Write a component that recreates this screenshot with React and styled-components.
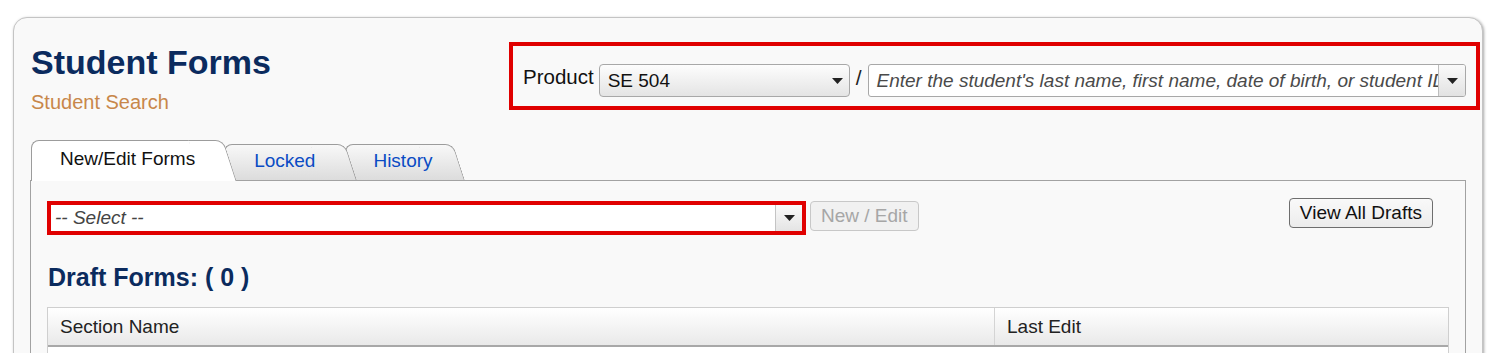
import React from 'react'
import styled, { createGlobalStyle } from 'styled-components'

const GlobalStyle = createGlobalStyle`
  body {
    margin: 0;
    background: #ffffff;
    font-family: "Liberation Sans", Arial, sans-serif;
  }
`

const Page = styled.div`
  padding: 17px 17px 0 13px;
`

const Panel = styled.div`
  background: #f9f9f9;
  border: 1px solid #c4c4c4;
  border-radius: 14px;
  box-shadow: 1px 1px 3px rgba(0, 0, 0, 0.35);
  padding: 0 16px 40px 16px;
`

const Header = styled.div`
  display: flex;
  justify-content: space-between;
  align-items: flex-start;
  padding: 24px 0 0 1px;
  margin-right: -14px;
`

const TitleBlock = styled.div`
  display: flex;
  flex-direction: column;
`

const Title = styled.h1`
  margin: 0;
  font-size: 34px;
  line-height: 40px;
  font-weight: bold;
  color: #0b2b5e;
`

const SubTitle = styled.div`
  margin-top: 8px;
  font-size: 20px;
  line-height: 24px;
  color: #c8874a;
`

const Highlight = styled.div`
  display: flex;
  align-items: center;
  border: 4px solid #e00000;
  padding: 18px 10px 9px 10px;
  width: 943px;
  gap: 5px;
`

const Label = styled.span`
  font-size: 20.5px;
  color: #111;
  margin-bottom: 7px;
`

const ProductSelect = styled.div`
  display: flex;
  align-items: center;
  justify-content: space-between;
  box-sizing: border-box;
  width: 251px;
  height: 33px;
  padding: 0 6px 0 8px;
  border: 1px solid #a8a8a8;
  border-radius: 4px;
  background: linear-gradient(#fdfdfd, #e4e4e4);
  font-size: 19px;
  color: #111;
`

const Slash = styled.span`
  font-size: 21px;
  color: #222;
  margin: 0 1px 6px 1px;
`

const Combo = styled.div`
  display: flex;
  flex: 1;
  min-width: 0;
  box-sizing: border-box;
  height: 33px;
  border: 1px solid #a8a8a8;
  border-radius: 3px;
  background: #fff;
  overflow: hidden;
`

const ComboText = styled.div`
  flex: 1;
  display: flex;
  align-items: center;
  padding-left: 8px;
  font-size: 19px;
  font-style: italic;
  color: #4a4a4a;
  white-space: nowrap;
  overflow: hidden;
`

const ComboButton = styled.div`
  flex: none;
  width: 26px;
  display: flex;
  align-items: center;
  justify-content: center;
  border-left: 1px solid #bdbdbd;
  background: linear-gradient(#fafafa, #e2e2e2);
`

const TabStrip = styled.div`
  display: flex;
  align-items: flex-end;
  margin-top: 26px;
  padding-left: 1px;
  height: 40px;
`

const Tab = styled.div`
  position: relative;
  z-index: ${(p) => p.$z};
  box-sizing: border-box;
  height: ${(p) => (p.$active ? 41 : 37)}px;
  margin-bottom: -1px;
  padding: 0 ${(p) => p.$right}px 4px ${(p) => p.$left}px;
  display: flex;
  align-items: center;
  font-size: 19px;
  color: ${(p) => (p.$active ? '#111' : '#0a4bc4')};

  &::before,
  &::after {
    content: '';
    position: absolute;
    top: 0;
    bottom: ${(p) => (p.$active ? 0 : 1)}px;
    z-index: -1;
    border-top: 1px solid #9c9c9c;
    background: ${(p) =>
      p.$active ? '#ffffff' : 'linear-gradient(#f8f8f8, #dcdcdc)'};
  }

  &::before {
    left: 0;
    right: 10px;
    border-left: 1px solid #9c9c9c;
    border-top-left-radius: 8px;
  }

  &::after {
    right: -6px;
    width: 34px;
    border-right: 1px solid #9c9c9c;
    border-top-right-radius: 8px;
    transform: skewX(18deg);
  }
`

const TabPanel = styled.div`
  border: 1px solid #a2a2a2;
  background: #f9f9f9;
  padding: 20px 16px 0 16px;
`

const ToolRow = styled.div`
  display: flex;
  align-items: flex-start;
  gap: 4px;
`

const RedSelect = styled.div`
  display: flex;
  width: 759px;
  height: 34px;
  box-sizing: border-box;
  border: 4px solid #e00000;
  background: #fff;
`

const SelectText = styled.div`
  flex: 1;
  display: flex;
  align-items: center;
  padding-left: 4px;
  font-size: 19px;
  font-style: italic;
  color: #444;
`

const SelectButton = styled.div`
  width: 26px;
  display: flex;
  align-items: center;
  justify-content: center;
  border-left: 1px solid #c4c4c4;
  background: linear-gradient(#fafafa, #e4e4e4);
`

const Button = styled.button`
  box-sizing: border-box;
  height: 30px;
  padding: 0 10px;
  font-family: inherit;
  font-size: 19px;
  border-radius: 4px;
  border: 1px solid ${(p) => (p.disabled ? '#c8c8c8' : '#6e6e6e')};
  color: ${(p) => (p.disabled ? '#a6a6a6' : '#111')};
  background: ${(p) => (p.disabled ? '#f1f1f1' : 'linear-gradient(#f9f9f9, #ececec)')};
  margin-top: ${(p) => p.$offset || 0}px;
  margin-right: ${(p) => p.$right || 0}px;
`

const Spacer = styled.div`
  flex: 1;
`

const SectionHeading = styled.h2`
  margin: 28px 0 0 1px;
  font-size: 25px;
  line-height: 28px;
  font-weight: bold;
  color: #0b2b5e;
`

const Table = styled.div`
  margin-top: 16px;
  border: 1px solid #cfcfcf;
  background: #fff;
`

const HeaderRow = styled.div`
  display: grid;
  grid-template-columns: 946px 1fr;
  height: 37px;
  border-bottom: 2px solid #a8a8a8;
  background: linear-gradient(#ffffff, #e9e9e9);
`

const HeaderCell = styled.div`
  display: flex;
  align-items: center;
  padding-left: 12px;
  font-size: 19px;
  color: #222;
  border-left: ${(p) => (p.$divider ? '1px solid #d4d4d4' : 'none')};
`

const BodyRow = styled.div`
  height: 40px;
`

const Arrow = () => (
  <svg width="11" height="6" viewBox="0 0 11 6">
    <path d="M0 0 L11 0 L5.5 6 Z" fill="#222" />
  </svg>
)

const App = () => {
  return (
    <Page>
      <GlobalStyle />
      <Panel>
        <Header>
          <TitleBlock>
            <Title>Student Forms</Title>
            <SubTitle>Student Search</SubTitle>
          </TitleBlock>
          <Highlight>
            <Label>Product</Label>
            <ProductSelect>
              <span>SE 504</span>
              <Arrow />
            </ProductSelect>
            <Slash>/</Slash>
            <Combo>
              <ComboText>
                Enter the student's last name, first name, date of birth, or student ID
              </ComboText>
              <ComboButton>
                <Arrow />
              </ComboButton>
            </Combo>
          </Highlight>
        </Header>

        <TabStrip>
          <Tab $active $z={3} $left={29} $right={29}>New/Edit Forms</Tab>
          <Tab $z={2} $left={30} $right={30}>Locked</Tab>
          <Tab $z={1} $left={28} $right={20}>History</Tab>
        </TabStrip>

        <TabPanel>
          <ToolRow>
            <RedSelect>
              <SelectText>-- Select --</SelectText>
              <SelectButton>
                <Arrow />
              </SelectButton>
            </RedSelect>
            <Button disabled>New / Edit</Button>
            <Spacer />
            <Button $offset={-3} $right={16}>View All Drafts</Button>
          </ToolRow>

          <SectionHeading>Draft Forms: ( 0 )</SectionHeading>

          <Table>
            <HeaderRow>
              <HeaderCell>Section Name</HeaderCell>
              <HeaderCell $divider>Last Edit</HeaderCell>
            </HeaderRow>
            <BodyRow />
          </Table>
        </TabPanel>
      </Panel>
    </Page>
  )
}

export default App
